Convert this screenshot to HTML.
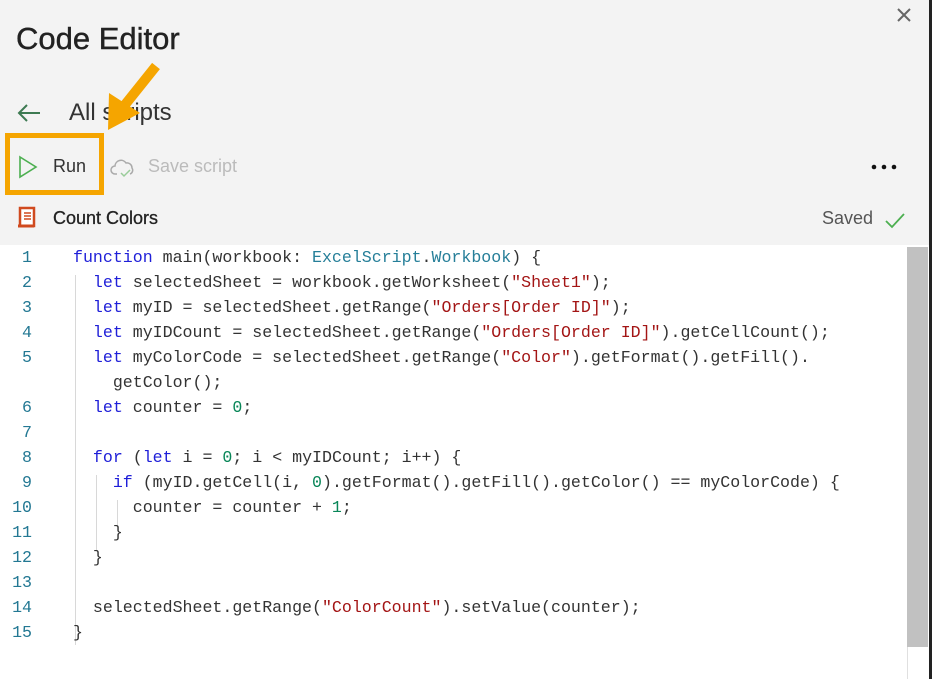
<!DOCTYPE html>
<html><head><style>
body{margin:0;width:932px;height:679px;overflow:hidden;background:#fff;font-family:"Liberation Sans",sans-serif;position:relative}
.hdr{position:absolute;left:0;top:0;width:930px;height:245px;background:#f3f3f3}
.t{position:absolute;white-space:nowrap}
.code{position:absolute;left:0;top:245px;font-family:"Liberation Mono",monospace;font-size:16.6px;color:#333}
.ln{position:absolute;left:0;width:32px;text-align:right;color:#237893}
.cl{position:absolute;left:73px;white-space:pre}
.k{color:#1f1fd8}.s{color:#a31515}.ty{color:#267f99}.n{color:#098658}
.g{position:absolute;width:1px;background:#d8d8d8}
</style></head><body>
<div class="hdr"></div>
<div class="t" style="left:16px;top:21px;font-size:31px;color:#222;-webkit-text-stroke:0.4px #222">Code Editor</div>
<svg class="t" style="left:895px;top:6px" width="18" height="18"><path d="M3 3L15 15M15 3L3 15" stroke="#666" stroke-width="2"/></svg>
<svg class="t" style="left:16px;top:103px" width="26" height="20"><path d="M24 10H3M11 2L3 10L11 18" stroke="#3d7a52" stroke-width="2" fill="none"/></svg>
<div class="t" style="left:69px;top:99px;font-size:24px;color:#333">All scripts</div>
<svg class="t" style="left:18px;top:155px" width="20" height="24"><path d="M2 2L18 12L2 22Z" stroke="#4caf50" stroke-width="1.6" fill="none"/></svg>
<div class="t" style="left:53px;top:156px;font-size:18px;color:#333">Run</div>
<svg class="t" style="left:110px;top:156px" width="28" height="24"><path d="M7 18H5a4 4 0 0 1 0-8 6 6 0 0 1 11-3 5 5 0 0 1 6 5 4 4 0 0 1 -2 6" stroke="#aaa" stroke-width="1.5" fill="none"/><path d="M11 17l3 3 6-6" stroke="#9c9" stroke-width="1.5" fill="none"/></svg>
<div class="t" style="left:148px;top:156px;font-size:18px;color:#bbb">Save script</div>
<svg class="t" style="left:870px;top:162px" width="28" height="10"><circle cx="4" cy="5" r="2.3" fill="#111"/><circle cx="14" cy="5" r="2.3" fill="#111"/><circle cx="24" cy="5" r="2.3" fill="#111"/></svg>
<svg class="t" style="left:16px;top:206px" width="24" height="24"><rect x="4" y="2" width="14" height="18" fill="#fff" stroke="#d04a1f" stroke-width="2.5"/><path d="M8 7h7M8 10h7M8 13h7" stroke="#d04a1f" stroke-width="1.5"/><path d="M2 20h16" stroke="#d04a1f" stroke-width="3"/></svg>
<div class="t" style="left:53px;top:208px;font-size:18px;color:#222;-webkit-text-stroke:0.3px #222">Count Colors</div>
<div class="t" style="left:822px;top:208px;font-size:18px;color:#555">Saved</div>
<svg class="t" style="left:884px;top:211px" width="22" height="18"><path d="M2 10l6 6L20 3" stroke="#4caf50" stroke-width="1.8" fill="none"/></svg>
<div style="position:absolute;left:907px;top:247px;width:21px;height:400px;background:#c1c1c1"></div>
<div style="position:absolute;left:907px;top:647px;width:1px;height:32px;background:#e0e0e0"></div>
<div style="position:absolute;left:929px;top:0;width:3px;height:679px;background:#222"></div>
<div class="code">
<div class="g" style="left:75px;top:30px;height:370px"></div>
<div class="g" style="left:96px;top:230px;height:75px"></div>
<div class="g" style="left:117px;top:255px;height:25px"></div>
<div class="ln" style="top:3px">1</div><div class="cl" style="top:3px"><span class="k">function</span> main(workbook: <span class="ty">ExcelScript</span>.<span class="ty">Workbook</span>) {</div>
<div class="ln" style="top:28px">2</div><div class="cl" style="top:28px">  <span class="k">let</span> selectedSheet = workbook.getWorksheet(<span class="s">"Sheet1"</span>);</div>
<div class="ln" style="top:53px">3</div><div class="cl" style="top:53px">  <span class="k">let</span> myID = selectedSheet.getRange(<span class="s">"Orders[Order ID]"</span>);</div>
<div class="ln" style="top:78px">4</div><div class="cl" style="top:78px">  <span class="k">let</span> myIDCount = selectedSheet.getRange(<span class="s">"Orders[Order ID]"</span>).getCellCount();</div>
<div class="ln" style="top:103px">5</div><div class="cl" style="top:103px">  <span class="k">let</span> myColorCode = selectedSheet.getRange(<span class="s">"Color"</span>).getFormat().getFill().</div>
<div class="cl" style="top:128px">    getColor();</div>
<div class="ln" style="top:153px">6</div><div class="cl" style="top:153px">  <span class="k">let</span> counter = <span class="n">0</span>;</div>
<div class="ln" style="top:178px">7</div>
<div class="ln" style="top:203px">8</div><div class="cl" style="top:203px">  <span class="k">for</span> (<span class="k">let</span> i = <span class="n">0</span>; i &lt; myIDCount; i++) {</div>
<div class="ln" style="top:228px">9</div><div class="cl" style="top:228px">    <span class="k">if</span> (myID.getCell(i, <span class="n">0</span>).getFormat().getFill().getColor() == myColorCode) {</div>
<div class="ln" style="top:253px">10</div><div class="cl" style="top:253px">      counter = counter + <span class="n">1</span>;</div>
<div class="ln" style="top:278px">11</div><div class="cl" style="top:278px">    }</div>
<div class="ln" style="top:303px">12</div><div class="cl" style="top:303px">  }</div>
<div class="ln" style="top:328px">13</div>
<div class="ln" style="top:353px">14</div><div class="cl" style="top:353px">  selectedSheet.getRange(<span class="s">"ColorCount"</span>).setValue(counter);</div>
<div class="ln" style="top:378px">15</div><div class="cl" style="top:378px">}</div>
</div>
<div style="position:absolute;left:5px;top:133px;width:89px;height:52px;border:5px solid #f5a500"></div>
<svg style="position:absolute;left:100px;top:60px" width="70" height="80"><path d="M56 6L24 46" stroke="#f5a500" stroke-width="10"/><path d="M8 70L9 33L40 53Z" fill="#f5a500"/></svg>
</body></html>
